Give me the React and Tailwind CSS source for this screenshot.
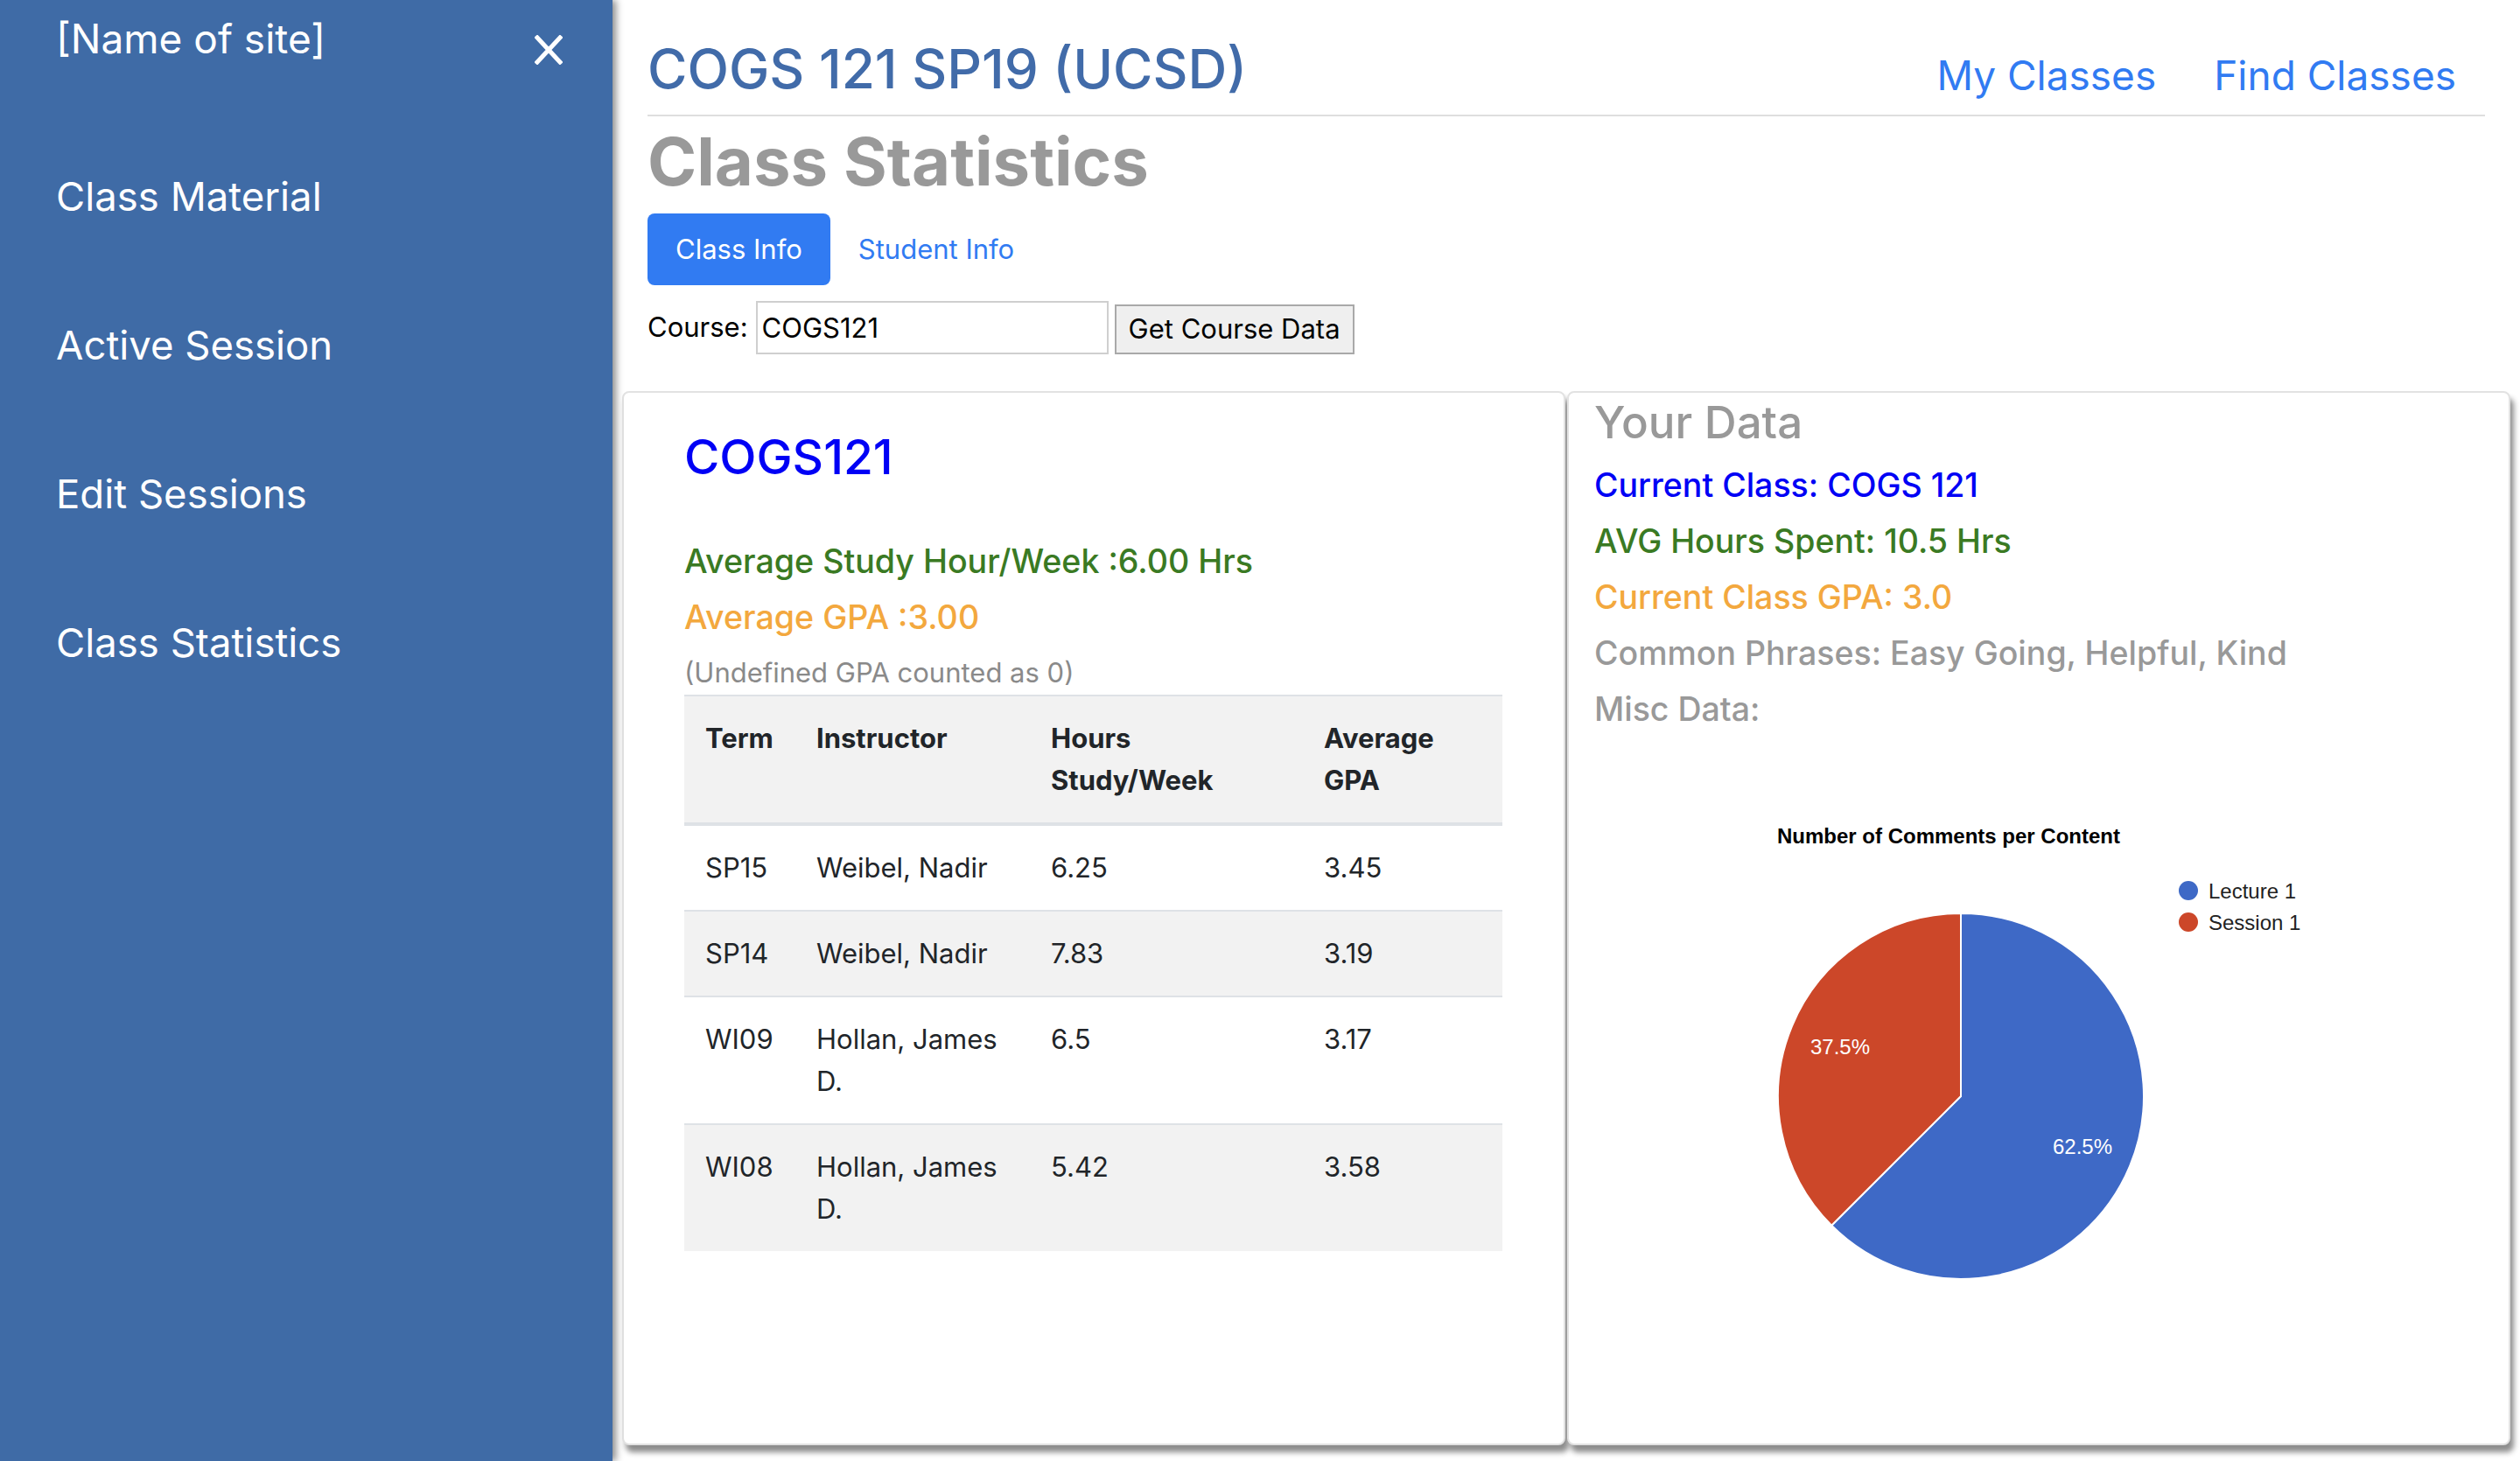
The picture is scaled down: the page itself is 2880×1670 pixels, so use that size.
import React from "react";

const sideLinks = ["Class Material", "Active Session", "Edit Sessions", "Class Statistics"];

const rows = [
  { term: "SP15", instructor: "Weibel, Nadir", hours: "6.25", gpa: "3.45" },
  { term: "SP14", instructor: "Weibel, Nadir", hours: "7.83", gpa: "3.19" },
  { term: "WI09", instructor: "Hollan, James D.", hours: "6.5", gpa: "3.17" },
  { term: "WI08", instructor: "Hollan, James D.", hours: "5.42", gpa: "3.58" },
];

function Sidebar() {
  return (
    <aside className="relative z-10 h-full w-[700px] shrink-0 bg-[#3f6ba6] pl-[64px] pr-[57px] text-white shadow-[4px_0_8px_rgba(0,0,0,0.45)]">
      <div className="flex items-start justify-between pt-[15px]">
        <span className="text-[46px] leading-[58px]">[Name of site]</span>
        <button className="mt-[25px]">
          <svg width="32" height="34" viewBox="0 0 32 34">
            <path d="M3 3 L29 31 M29 3 L3 31" stroke="white" strokeWidth="5" strokeLinecap="square" />
          </svg>
        </button>
      </div>
      {/* nav links */}
      <nav className="mt-[122px] flex flex-col gap-[112px]">
        {sideLinks.map((l) => (
          <a key={l} className="text-[45.5px] leading-[58px]">
            {l}
          </a>
        ))}
      </nav>
    </aside>
  );
}

function PieChart() {
  const cx = 419;
  const cy = 402;
  const r = 209;
  const ex = cx - r * Math.SQRT1_2;
  const ey = cy + r * Math.SQRT1_2;
  return (
    <svg width="1000" height="720" viewBox="0 0 1000 720" className="block">
      <text x="209" y="113" fontFamily="'Liberation Sans', Arial, sans-serif" fontSize="24" fontWeight="bold" fill="#000">
        Number of Comments per Content
      </text>
      <circle cx="679" cy="167" r="11" fill="#3e69c6" />
      <text x="702" y="176" fontFamily="'Liberation Sans', Arial, sans-serif" fontSize="24" fill="#222">
        Lecture 1
      </text>
      <circle cx="679" cy="203" r="11" fill="#cc4729" />
      <text x="702" y="212" fontFamily="'Liberation Sans', Arial, sans-serif" fontSize="24" fill="#222">
        Session 1
      </text>
      <path d={`M${cx} ${cy} L${cx} ${cy - r} A${r} ${r} 0 1 1 ${ex} ${ey} Z`} fill="#3e69c6" stroke="#fff" strokeWidth="2" />
      <path d={`M${cx} ${cy} L${ex} ${ey} A${r} ${r} 0 0 1 ${cx} ${cy - r} Z`} fill="#cc4729" stroke="#fff" strokeWidth="2" />
      <text x="558" y="468" textAnchor="middle" fontFamily="'Liberation Sans', Arial, sans-serif" fontSize="24" fill="#fff">
        62.5%
      </text>
      <text x="281" y="354" textAnchor="middle" fontFamily="'Liberation Sans', Arial, sans-serif" fontSize="24" fill="#fff">
        37.5%
      </text>
    </svg>
  );
}

function ClassCard() {
  return (
    <div className="h-[1205px] w-[1078px] rounded-[8px] border-2 border-[#e2e2e2] bg-white px-[69px] pt-[40px] shadow-[4px_8px_6px_rgba(0,0,0,0.45)]">
      <h3 className="text-[55px] font-medium leading-[67px] text-[#0000f5]">COGS121</h3>
      <h5 className="mt-[62px] text-[37.6px] font-medium leading-[48px] text-[#3a7a23]">Average Study Hour/Week :6.00 Hrs</h5>
      <h5 className="mt-[16px] text-[37.6px] font-medium leading-[48px] text-[#f3a83e]">Average GPA :3.00</h5>
      <p className="mt-[15px] text-[31px] leading-[48px] text-[#8a8a8a]">(Undefined GPA counted as 0)</p>

      <table className="mt-[1px] w-[935px] table-fixed border-collapse text-left text-[31px] leading-[48px] text-[#212529]">
        <colgroup>
          <col className="w-[127px]" />
          <col className="w-[268px]" />
          <col className="w-[312px]" />
          <col className="w-[228px]" />
        </colgroup>
        <thead>
          <tr className="border-t-2 border-b-[4px] border-[#dee2e6] bg-[#f2f2f2]">
            <th className="px-[24px] py-[24px] align-top font-bold">Term</th>
            <th className="px-[24px] py-[24px] align-top font-bold">Instructor</th>
            <th className="px-[24px] py-[24px] align-top font-bold">Hours Study/Week</th>
            <th className="px-[24px] py-[24px] align-top font-bold">Average GPA</th>
          </tr>
        </thead>
        <tbody>
          {rows.map((r, i) => (
            <tr key={r.term} className={`border-t-2 border-[#dee2e6] ${i % 2 === 1 ? "bg-[#f2f2f2]" : "bg-white"}`}>
              <td className="px-[24px] py-[24px] align-top">{r.term}</td>
              <td className="px-[24px] py-[24px] align-top">{r.instructor}</td>
              <td className="px-[24px] py-[24px] align-top">{r.hours}</td>
              <td className="px-[24px] py-[24px] align-top">{r.gpa}</td>
            </tr>
          ))}
        </tbody>
      </table>
    </div>
  );
}

function DataCard() {
  return (
    <div className="h-[1205px] w-[1078px] rounded-[8px] border-2 border-[#e2e2e2] bg-white pl-[29px] shadow-[4px_8px_6px_rgba(0,0,0,0.45)]">
      <h3 className="text-[51px] font-medium leading-[67px] text-[#999]">Your Data</h3>
      <div className="mt-[15px] flex flex-col gap-[16px] text-[37.5px] font-medium leading-[48px]">
        <h5 className="text-[#0000f5]">Current Class: COGS 121</h5>
        <h5 className="text-[#3a7a23]">AVG Hours Spent: 10.5 Hrs</h5>
        <h5 className="text-[#f3a83e]">Current Class GPA: 3.0</h5>
        <h5 className="text-[#999]">Common Phrases: Easy Going, Helpful, Kind</h5>
        <h5 className="text-[#999]">Misc Data:</h5>
      </div>
      <div className="mt-[16px]">
        <PieChart />
      </div>
    </div>
  );
}

export default function App() {
  return (
    <div className="flex h-[1670px] w-[2880px] overflow-hidden bg-white font-[Inter,sans-serif]">
      <Sidebar />

      <main className="min-w-0 flex-1 px-[40px]">
        <header className="flex h-[133px] items-start border-b-2 border-[#dedede]">
          <h2 className="pt-[40px] text-[62px] font-medium leading-[77px] text-[#416ba9]">COGS 121 SP19 (UCSD)</h2>
          <nav className="ml-auto flex gap-[66px] pr-[33px] pt-[57px] text-[46px] leading-[58px] text-[#317bf2]">
            <a>My Classes</a>
            <a>Find Classes</a>
          </nav>
        </header>

        <h1 className="mt-[3px] text-[76px] font-bold leading-[96px] text-[#999]">Class Statistics</h1>

        <div className="mt-[12px] flex text-[31px] leading-[48px]">
          <button className="rounded-[8px] bg-[#317bf2] px-[32px] py-[17px] text-white">Class Info</button>
          <button className="px-[32px] py-[17px] text-[#317bf2]">Student Info</button>
        </div>

        <div className="mt-[18px] flex items-end text-[31px] text-black">
          <span className="mb-[7px] leading-[48px]">Course:</span>
          <input
            className="ml-[9px] h-[61px] w-[403px] border-2 border-[#cfcfcf] px-[5px] outline-none"
            defaultValue="COGS121"
          />
          <button className="ml-[7px] h-[57px] border-2 border-[#a9a9a9] bg-[#efefef] px-[14px]">Get Course Data</button>
        </div>

        <div className="-mx-[29px] mt-[42px] flex gap-[2px]">
          <ClassCard />
          <DataCard />
        </div>
      </main>
    </div>
  );
}
